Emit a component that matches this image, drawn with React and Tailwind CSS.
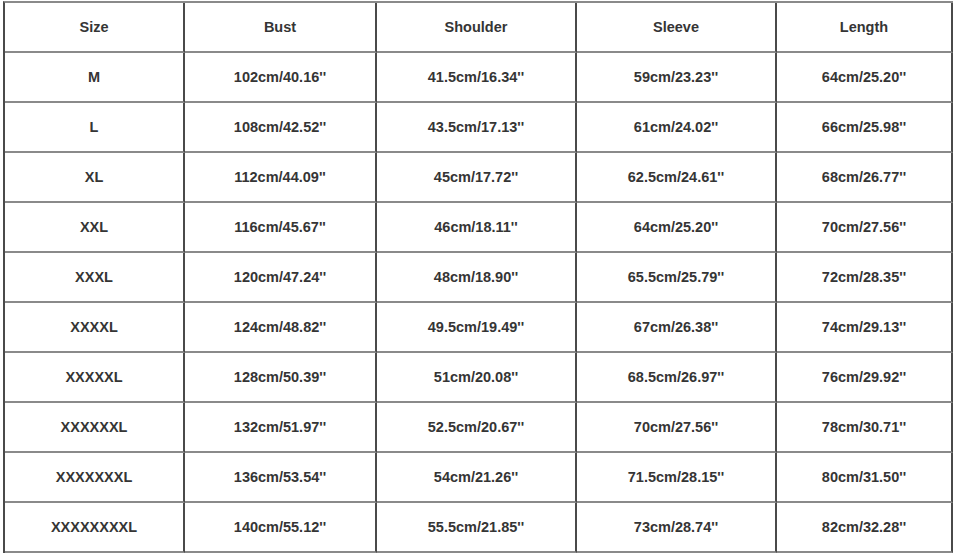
import React from "react";

const headers = ["Size", "Bust", "Shoulder", "Sleeve", "Length"];

const rows = [
  ["M", "102cm/40.16''", "41.5cm/16.34''", "59cm/23.23''", "64cm/25.20''"],
  ["L", "108cm/42.52''", "43.5cm/17.13''", "61cm/24.02''", "66cm/25.98''"],
  ["XL", "112cm/44.09''", "45cm/17.72''", "62.5cm/24.61''", "68cm/26.77''"],
  ["XXL", "116cm/45.67''", "46cm/18.11''", "64cm/25.20''", "70cm/27.56''"],
  ["XXXL", "120cm/47.24''", "48cm/18.90''", "65.5cm/25.79''", "72cm/28.35''"],
  ["XXXXL", "124cm/48.82''", "49.5cm/19.49''", "67cm/26.38''", "74cm/29.13''"],
  ["XXXXXL", "128cm/50.39''", "51cm/20.08''", "68.5cm/26.97''", "76cm/29.92''"],
  ["XXXXXXL", "132cm/51.97''", "52.5cm/20.67''", "70cm/27.56''", "78cm/30.71''"],
  ["XXXXXXXL", "136cm/53.54''", "54cm/21.26''", "71.5cm/28.15''", "80cm/31.50''"],
  ["XXXXXXXXL", "140cm/55.12''", "55.5cm/21.85''", "73cm/28.74''", "82cm/32.28''"],
];

function Cell({ children }) {
  return (
    <div className="h-[50px] pt-[2px] flex items-center justify-center border-r-2 border-r-[#4a4a4a] border-b-2 border-b-[#8a8a8a]">
      {children}
    </div>
  );
}

export default function App() {
  return (
    <div className="w-[956px] h-[556px] bg-white overflow-hidden pt-[1px] pl-[3px]">
      <div
        className="grid grid-cols-[180px_192px_200px_200px_176px] w-[950px] border-l-2 border-l-[#4a4a4a] border-t-2 border-t-[#8a8a8a] text-[14.5px] font-bold text-[#353535]"
        style={{ fontFamily: '"Liberation Sans", Arial, sans-serif' }}
      >
        {headers.map((h) => (
          <Cell key={h}>{h}</Cell>
        ))}
        {rows.map((r, i) =>
          r.map((v, j) => <Cell key={i + "-" + j}>{v}</Cell>)
        )}
      </div>
    </div>
  );
}
